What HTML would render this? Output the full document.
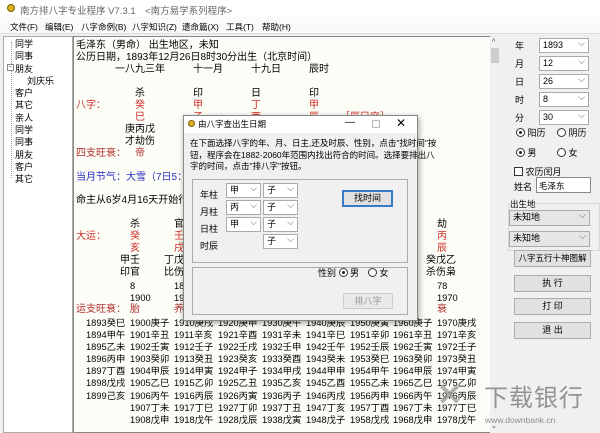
<!DOCTYPE html>
<html><head><meta charset="utf-8"><style>
*{margin:0;padding:0;box-sizing:border-box}
body{width:600px;height:433px;overflow:hidden;background:#f0f0f0;font-family:"Liberation Sans","Noto Sans CJK SC",sans-serif;position:relative;font-size:10px;color:#000}
.a{position:absolute;white-space:nowrap}
.m{font-size:10px;line-height:12px}
.r{color:#d0302a}
.br{color:#b03030}
.bl{color:#2b2fc0}
.cb{position:absolute;background:#fff;border:1px solid #aaa;height:15px;font-size:9px;padding-left:3px;line-height:13px}
.cb:after{content:"⌵";position:absolute;right:3px;top:-2px;font-size:9px;color:#555}
.btn{position:absolute;background:#e1e1e1;border:1px solid #adadad;text-align:center;font-size:9px;line-height:15px}
.rad{display:inline-block;width:9px;height:9px;border:1px solid #333;border-radius:50%;vertical-align:-1px;position:relative;background:#fff}
.rad.on:after{content:"";position:absolute;left:2px;top:2px;width:3px;height:3px;border-radius:50%;background:#222}
.y{font-size:9.3px;line-height:12.1px}
.lb{position:absolute;left:515px;font-size:9px}
</style></head><body>
<div class="a" style="left:0;top:0;width:600px;height:17px;background:#fff"></div>
<div class="a" style="left:7px;top:4px;width:8px;height:8px;border-radius:50%;background:#e0b020;border:1px solid #806000"></div>
<div class="a" style="left:20px;top:3px;font-size:9.5px;color:#666">南方排八字专业程序 V7.3.1　&lt;南方易学系列程序&gt;</div>
<div class="a" style="left:0;top:17px;width:600px;height:17px;background:#fafafa;border-bottom:1px solid #ddd"></div>
<div class="a" style="top:21px;left:10px;font-size:8.5px">文件(F)</div>
<div class="a" style="top:21px;left:45px;font-size:8.5px">编辑(E)</div>
<div class="a" style="top:21px;left:81px;font-size:8.5px">八字命例(B)</div>
<div class="a" style="top:21px;left:132px;font-size:8.5px">八字知识(Z)</div>
<div class="a" style="top:21px;left:182px;font-size:8.5px">遗命篇(X)</div>
<div class="a" style="top:21px;left:226px;font-size:8.5px">工具(T)</div>
<div class="a" style="top:21px;left:262px;font-size:8.5px">帮助(H)</div>
<div class="a" style="left:3px;top:36px;width:70px;height:397px;background:#fff;border:1px solid #aaa"></div>
<div class="a" style="left:11px;top:42px;width:1px;height:136px;border-left:1px dotted #999"></div>
<div class="a" style="left:15px;top:38px;font-size:9px;line-height:12.3px">同学<br>同事<br>朋友<br><span style="margin-left:12px">刘庆乐</span><br>客户<br>其它<br>亲人<br>同学<br>同事<br>朋友<br>客户<br>其它</div>
<div class="a" style="left:7px;top:64px;width:7px;height:7px;border:1px solid #888;background:#fff;font-size:7px;line-height:5px;text-align:center">-</div>
<div class="a" style="left:73px;top:36px;width:418px;height:397px;background:#fdfdf7;border:1px solid #888"></div>
<div class="a" style="left:490px;top:36px;width:10px;height:397px;background:#f0f0f0"></div>
<div class="a" style="left:492px;top:39px;font-size:7px;color:#444">^</div>
<div class="a" style="left:491px;top:48px;width:8px;height:15px;background:#cdcdcd"></div>
<div class="a" style="left:491px;top:422px;font-size:7px;color:#444">⌄</div>
<div class="a m" style="left:76px;top:40px">毛泽东（男命） 出生地区，未知</div>
<div class="a m" style="left:76px;top:52px">公历日期，1893年12月26日8时30分出生（北京时间）</div>
<div class="a m" style="left:115px;top:64px">一八九三年</div>
<div class="a m" style="left:193px;top:64px">十一月</div>
<div class="a m" style="left:251px;top:64px">十九日</div>
<div class="a m" style="left:309px;top:64px">辰时</div>
<div class="a m" style="left:135px;top:88px">杀</div><div class="a m" style="left:193px;top:88px">印</div><div class="a m" style="left:251px;top:88px">日</div><div class="a m" style="left:309px;top:88px">印</div>
<div class="a m r" style="left:76px;top:100px">八字：</div>
<div class="a m r" style="left:135px;top:100px">癸</div><div class="a m r" style="left:193px;top:100px">甲</div><div class="a m r" style="left:251px;top:100px">丁</div><div class="a m r" style="left:309px;top:100px">甲</div>
<div class="a m r" style="left:135px;top:112px">巳</div><div class="a m r" style="left:193px;top:112px">子</div><div class="a m r" style="left:251px;top:112px">酉</div><div class="a m r" style="left:309px;top:112px">辰</div><div class="a m r" style="left:340px;top:112px">［辰巳空］</div>
<div class="a m" style="left:125px;top:124px">庚丙戊</div>
<div class="a m" style="left:125px;top:136px">才劫伤</div>
<div class="a m br" style="left:76px;top:148px">四支旺衰：</div><div class="a m br" style="left:135px;top:148px">帝</div>
<div class="a m bl" style="left:76px;top:172px">当月节气：大雪（7日5：</div>
<div class="a m" style="left:76px;top:195px">命主从6岁4月16天开始行</div>
<div class="a m" style="left:130px;top:219px">杀</div><div class="a m" style="left:174px;top:219px">官</div><div class="a m" style="left:437px;top:219px">劫</div>
<div class="a m r" style="left:76px;top:231px">大运：</div>
<div class="a m r" style="left:130px;top:231px">癸</div><div class="a m r" style="left:174px;top:231px">壬</div><div class="a m r" style="left:437px;top:231px">丙</div>
<div class="a m r" style="left:130px;top:243px">亥</div><div class="a m r" style="left:174px;top:243px">戌</div><div class="a m r" style="left:437px;top:243px">辰</div>
<div class="a m" style="left:120px;top:255px">甲壬</div><div class="a m" style="left:164px;top:255px">丁戊</div><div class="a m" style="left:426px;top:255px">癸戊乙</div>
<div class="a m" style="left:120px;top:267px">印官</div><div class="a m" style="left:164px;top:267px">比伤</div><div class="a m" style="left:426px;top:267px">杀伤枭</div>
<div class="a y" style="left:130px;top:280px">8</div><div class="a y" style="left:174px;top:280px">18</div><div class="a y" style="left:437px;top:280px">78</div>
<div class="a y" style="left:130px;top:292px">1900</div><div class="a y" style="left:174px;top:292px">1910</div><div class="a y" style="left:437px;top:292px">1970</div>
<div class="a m br" style="left:76px;top:304px">运支旺衰：</div><div class="a m br" style="left:130px;top:304px">胎</div><div class="a m br" style="left:174px;top:304px">养</div><div class="a m br" style="left:437px;top:304px">衰</div>
<div class="a y" style="left:86px;top:317px">1893癸巳<br>1894甲午<br>1895乙未<br>1896丙申<br>1897丁酉<br>1898戊戌<br>1899己亥</div>
<div class="a y" style="left:130px;top:317px">1900庚子<br>1901辛丑<br>1902壬寅<br>1903癸卯<br>1904甲辰<br>1905乙巳<br>1906丙午<br>1907丁未<br>1908戊申</div>
<div class="a y" style="left:174px;top:317px">1910庚戌<br>1911辛亥<br>1912壬子<br>1913癸丑<br>1914甲寅<br>1915乙卯<br>1916丙辰<br>1917丁巳<br>1918戊午</div>
<div class="a y" style="left:218px;top:317px">1920庚申<br>1921辛酉<br>1922壬戌<br>1923癸亥<br>1924甲子<br>1925乙丑<br>1926丙寅<br>1927丁卯<br>1928戊辰</div>
<div class="a y" style="left:262px;top:317px">1930庚午<br>1931辛未<br>1932壬申<br>1933癸酉<br>1934甲戌<br>1935乙亥<br>1936丙子<br>1937丁丑<br>1938戊寅</div>
<div class="a y" style="left:306px;top:317px">1940庚辰<br>1941辛巳<br>1942壬午<br>1943癸未<br>1944甲申<br>1945乙酉<br>1946丙戌<br>1947丁亥<br>1948戊子</div>
<div class="a y" style="left:350px;top:317px">1950庚寅<br>1951辛卯<br>1952壬辰<br>1953癸巳<br>1954甲午<br>1955乙未<br>1956丙申<br>1957丁酉<br>1958戊戌</div>
<div class="a y" style="left:393px;top:317px">1960庚子<br>1961辛丑<br>1962壬寅<br>1963癸卯<br>1964甲辰<br>1965乙巳<br>1966丙午<br>1967丁未<br>1968戊申</div>
<div class="a y" style="left:437px;top:317px">1970庚戌<br>1971辛亥<br>1972壬子<br>1973癸丑<br>1974甲寅<br>1975乙卯<br>1976丙辰<br>1977丁巳<br>1978戊午</div>
<div class="a" style="left:437px;top:381px;font-size:30px;font-weight:bold;color:rgba(150,150,150,.75);line-height:30px">✕</div>
<div class="a" style="left:484px;top:386px;font-size:24px;color:rgba(130,130,130,.85);letter-spacing:1px;line-height:26px">下载银行</div>
<div class="a" style="left:485px;top:415px;font-size:8.5px;color:rgba(130,130,130,.9)">www.downbank.cn</div>
<div class="lb" style="top:39px">年</div>
<div class="lb" style="top:57px">月</div>
<div class="lb" style="top:75px">日</div>
<div class="lb" style="top:93px">时</div>
<div class="lb" style="top:111px">分</div>
<div class="cb" style="left:539px;top:38px;width:50px">1893</div>
<div class="cb" style="left:539px;top:56px;width:50px">12</div>
<div class="cb" style="left:539px;top:74px;width:50px">26</div>
<div class="cb" style="left:539px;top:92px;width:50px">8</div>
<div class="cb" style="left:539px;top:110px;width:50px">30</div>
<div class="a" style="left:516px;top:126px;font-size:9px"><span class="rad on"></span> 阳历　 <span class="rad"></span> 阴历</div>
<div class="a" style="left:516px;top:146px;font-size:9px"><span class="rad on"></span> 男　　 <span class="rad"></span> 女</div>
<div class="a" style="left:514px;top:165px;font-size:9px"><span style="display:inline-block;width:9px;height:9px;border:1px solid #333;background:#fff;vertical-align:-1px"></span> 农历闰月</div>
<div class="a" style="left:514px;top:180px;font-size:9px">姓名</div>
<div class="a" style="left:536px;top:177px;width:55px;height:16px;background:#fff;border:1px solid #888;font-size:8.5px;padding:2px">毛泽东</div>
<div class="a" style="left:508px;top:203px;width:92px;height:48px;border:1px solid #d8d8d8"></div>
<div class="a" style="left:510px;top:198px;font-size:8.5px;background:#f0f0f0">出生地</div>
<div class="cb" style="left:509px;top:210px;width:81px;height:16px;background:#e6e6e6">未知地</div>
<div class="cb" style="left:509px;top:231px;width:81px;height:16px;background:#e6e6e6">未知地</div>
<div class="btn" style="left:514px;top:250px;width:77px;height:17px;font-size:8.5px;white-space:nowrap">八字五行十神图解</div>
<div class="btn" style="left:514px;top:275px;width:77px;height:17px">执 行</div>
<div class="btn" style="left:514px;top:298px;width:77px;height:17px">打 印</div>
<div class="btn" style="left:514px;top:322px;width:77px;height:17px">退 出</div>
<div class="a" style="left:183px;top:115px;width:235px;height:206px;background:#f0f0f0;border:1px solid #888;box-shadow:1px 2px 6px rgba(0,0,0,.35)"></div>
<div class="a" style="left:184px;top:116px;width:233px;height:17px;background:#fff"></div>
<div class="a" style="left:188px;top:120px;width:7px;height:7px;border-radius:50%;background:#e0b020;border:1px solid #806000"></div>
<div class="a" style="left:198px;top:118px;font-size:8.5px">由八字查出生日期</div>
<div class="a" style="left:345px;top:117px;font-size:10px">—</div>
<div class="a" style="left:372px;top:120px;width:8px;height:8px;border:1px solid #bbb"></div>
<div class="a" style="left:396px;top:116px;font-size:12px">✕</div>
<div class="a" style="left:190px;top:138px;font-size:8.5px;line-height:11.5px">在下面选择八字的年、月、日主,还及时辰、性别，点击"找时间"按<br>钮，程序会在1882-2060年范围内找出符合的时间。选择要排出八<br>字的时间，点击"排八字"按钮。</div>
<div class="a" style="left:192px;top:179px;width:216px;height:84px;border:1px solid #aaa"></div>
<div class="a" style="left:200px;top:187px;font-size:9px;line-height:17px">年柱<br>月柱<br>日柱<br>时辰</div>
<div class="cb" style="left:226px;top:183px;width:35px">甲</div><div class="cb" style="left:263px;top:183px;width:35px">子</div>
<div class="cb" style="left:226px;top:200px;width:35px">丙</div><div class="cb" style="left:263px;top:200px;width:35px">子</div>
<div class="cb" style="left:226px;top:217px;width:35px">甲</div><div class="cb" style="left:263px;top:217px;width:35px">子</div>
<div class="cb" style="left:263px;top:234px;width:35px">子</div>
<div class="btn" style="left:342px;top:190px;width:51px;height:17px;border:2px solid #3a78c8;line-height:13px">找时间</div>
<div class="a" style="left:192px;top:267px;width:216px;height:48px;border:1px solid #aaa"></div>
<div class="a" style="left:318px;top:266px;font-size:9px">性别 <span class="rad on"></span> 男　<span class="rad"></span> 女</div>
<div class="btn" style="left:343px;top:293px;width:50px;height:16px;color:#999;border-color:#ccc;background:#e8e8e8;line-height:14px">排八字</div>
</body></html>
